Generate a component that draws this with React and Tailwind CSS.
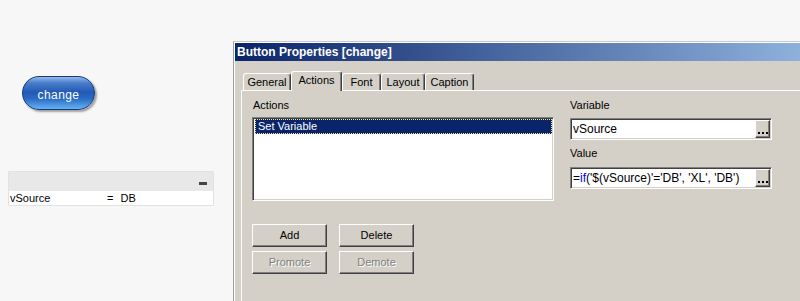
const raised =
  "border border-t-white border-l-white border-r-[#404040] border-b-[#404040] shadow-[inset_-1px_-1px_0_#808080]";
const sunken =
  "border border-t-[#808080] border-l-[#808080] border-r-white border-b-white shadow-[inset_1px_1px_0_#404040,inset_-1px_-1px_0_#d4d0c8]";

function Tab({ label, w, selected }) {
  if (selected) {
    return (
      <div
        className={`relative z-10 -mb-px h-[20px] ${w} shrink-0 bg-[#d4d0c8] border-t border-l border-r border-t-white border-l-white border-r-[#404040] rounded-t-[3px] shadow-[inset_-1px_0_0_#808080] flex items-start justify-center pt-[1px] text-[11px] leading-[14px] text-black`}
      >
        {label}
      </div>
    );
  }
  return (
    <div
      className={`h-[17px] ${w} shrink-0 bg-[#d4d0c8] border-t border-l border-r border-t-white border-l-white border-r-[#404040] rounded-t-[3px] shadow-[inset_-1px_0_0_#808080] flex items-start justify-center pt-[2px] text-[11px] leading-[13px] text-black`}
    >
      {label}
    </div>
  );
}

function Btn({ children, disabled }) {
  return (
    <div
      className={`w-[75px] h-[23px] ${raised} bg-[#d4d0c8] flex items-center justify-center text-[11px] ${
        disabled ? "text-[#808080] [text-shadow:1px_1px_0_#ffffff]" : "text-black"
      }`}
    >
      {children}
    </div>
  );
}

function Ellipsis() {
  return (
    <div
      className={`w-[15px] h-[18px] shrink-0 ${raised} bg-[#d4d0c8] flex items-end justify-center gap-[2px] pb-[3px]`}
    >
      <div className="w-[2px] h-[2px] bg-black" />
      <div className="w-[2px] h-[2px] bg-black" />
      <div className="w-[2px] h-[2px] bg-black" />
    </div>
  );
}

function Field({ children }) {
  return (
    <div
      className={`w-[202px] h-[22px] ${sunken} bg-white flex items-center pl-[2px] pr-[1px] py-[1px]`}
    >
      <div className="flex-1 text-[12px] leading-[16px] text-black whitespace-nowrap overflow-hidden">
        {children}
      </div>
      <Ellipsis />
    </div>
  );
}

function Dialog() {
  return (
    <div className="mt-[41px] w-[670px] h-[300px] shrink-0 bg-[#d4d0c8] border-t border-l border-t-[#c8c8c8] border-l-[#a0a0a0] flex flex-col">
      <div className="flex-1 border-t border-l border-white flex flex-col">
        <div className="h-[18px] bg-[linear-gradient(to_right,#0a246a,#a6caf0)] text-white font-bold text-[12px] leading-[18px] pl-[2px] whitespace-nowrap">
          Button Properties [change]
        </div>
        <div className="pl-[6px] flex-1 flex flex-col">
          <div className="mt-[10px] ml-[2px] h-[19px] flex items-end">
            <Tab label="General" w="w-[48px]" />
            <Tab label="Actions" w="w-[51px]" selected />
            <Tab label="Font" w="w-[39px]" />
            <Tab label="Layout" w="w-[44px]" />
            <Tab label="Caption" w="w-[49px]" />
          </div>
          <div className="flex-1 border-t border-l border-white pl-[10px] pt-[8px] flex text-[11px] text-black">
            <div className="w-[302px] shrink-0 flex flex-col">
              <div className="h-[13px] leading-[13px] pl-px">Actions</div>
              <div className={`mt-[5px] h-[84px] ${sunken} bg-white p-[2px] pt-[1px]`}>
                <div className="h-[15px] bg-[#0a246a] outline outline-1 outline-dotted outline-[#f0e68c] -outline-offset-1 text-white leading-[15px] pl-[3px] w-[297px]">
                  Set Variable
                </div>
              </div>
              <div className="mt-[23px] flex gap-[12px]">
                <Btn>Add</Btn>
                <Btn>Delete</Btn>
              </div>
              <div className="mt-[4px] flex gap-[12px]">
                <Btn disabled>Promote</Btn>
                <Btn disabled>Demote</Btn>
              </div>
            </div>
            <div className="ml-[16px] w-[202px] shrink-0 flex flex-col">
              <div className="h-[13px] leading-[13px]">Variable</div>
              <div className="mt-[6px]">
                <Field>vSource</Field>
              </div>
              <div className="mt-[7px] h-[13px] leading-[13px]">Value</div>
              <div className="mt-[7px]">
                <Field>
                  =<span className="text-[#0000ff]">if</span>('$(vSource)'='DB', 'XL', 'DB')
                </Field>
              </div>
            </div>
          </div>
        </div>
      </div>
    </div>
  );
}

export default function App() {
  return (
    <div className="w-[800px] h-[301px] overflow-hidden bg-[#f7f7f7] flex font-['Liberation_Sans',Arial,sans-serif]">
      <div className="w-[233px] shrink-0 flex flex-col">
        <div className="mt-[76px] ml-[22px] w-[73px] h-[34px] rounded-full border border-[#163a78] bg-[linear-gradient(to_bottom,#9ab9e8_0%,#4a7fcc_18%,#2159b3_48%,#2a6cc4_68%,#66b2f4_100%)] shadow-[2px_2px_2px_rgba(0,0,0,0.35)] flex items-center justify-center pt-[3px] text-white text-[12px] tracking-[0.4px]">
          change
        </div>
        <div className="mt-[61px] ml-[8px] w-[206px] border border-[#e2e2e2] rounded-[1px]">
          <div className="h-[19px] bg-[#e8e8e8] flex items-center justify-end pr-[6px]">
            <div className="w-[8px] h-[3px] bg-[#444444] mt-[4px]" />
          </div>
          <div className="h-[14px] bg-white flex items-center text-[11px] leading-[14px] text-black">
            <span className="pl-[1px] w-[98px]">vSource</span>
            <span>=</span>
            <span className="ml-[7px]">DB</span>
          </div>
        </div>
      </div>
      <Dialog />
    </div>
  );
}
